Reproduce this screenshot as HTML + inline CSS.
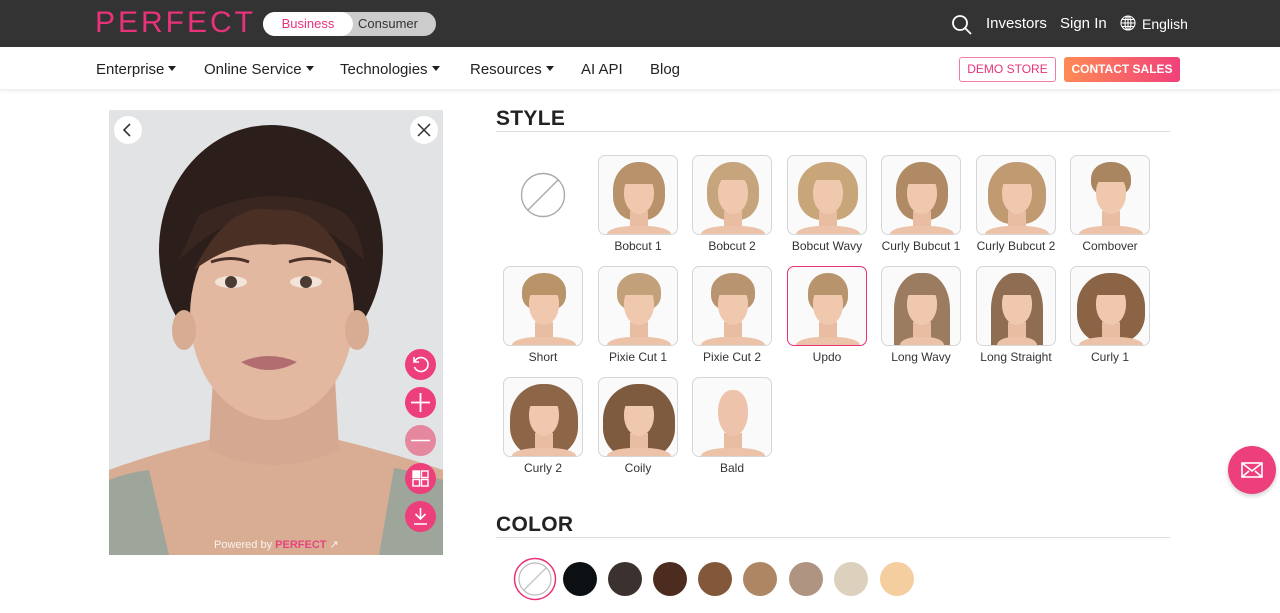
<!DOCTYPE html>
<html><head><meta charset="utf-8"><style>
*{margin:0;padding:0;box-sizing:border-box}
body{width:1280px;height:613px;overflow:hidden;background:#fff;font-family:"Liberation Sans",Roboto,sans-serif;color:#222;position:relative}
.top{position:absolute;left:0;top:0;width:1280px;height:47px;background:#333}
.logo{position:absolute;left:95px;top:6px;font-size:30px;letter-spacing:3px;color:#e8337a;font-weight:300}
.tog{position:absolute;left:263px;top:12px;width:173px;height:24px;border-radius:12px;background:#ccc}
.tog .b{position:absolute;left:0;top:0;width:90px;height:24px;border-radius:12px;background:#fff;color:#e8337a;font-size:13px;text-align:center;line-height:24px}
.tog .c{position:absolute;left:95px;top:0;font-size:13px;line-height:24px;color:#333}
.tr{position:absolute;top:15px;color:#fff;font-size:15px}
.nav{position:absolute;top:61px;font-size:15px;color:#222}
.nav i{display:inline-block;border-left:4px solid transparent;border-right:4px solid transparent;border-top:5px solid #222;margin-left:4px;vertical-align:3px}
.navbar{position:absolute;left:0;top:47px;width:1280px;height:43px;border-bottom:1px solid #eee;box-shadow:0 2px 3px rgba(0,0,0,.05)}
.btn1{position:absolute;left:959px;top:57px;width:97px;height:25px;border:1px solid #f07ca5;border-radius:3px;color:#e8337a;font-size:12px;text-align:center;line-height:23px}
.btn2{position:absolute;left:1064px;top:57px;width:116px;height:25px;border-radius:3px;background:linear-gradient(90deg,#ff8a55,#f0407a);color:#fff;font-size:12px;text-align:center;line-height:25px;font-weight:bold}
.panel{position:absolute;left:109px;top:110px;width:334px;height:445px;background:#e2e3e5;overflow:hidden}
.h{position:absolute;left:496px;font-size:21px;font-weight:bold;color:#222;letter-spacing:.3px}
.line{position:absolute;left:496px;width:674px;height:1px;background:#ddd}
.t{position:absolute;width:80px;height:80px;border:1px solid #d6d6d6;border-radius:7px;overflow:hidden;background:#fafafa}
.t.sel{border:1.5px solid #e8337a}
.t .hr{position:absolute;left:14px;top:6px;width:52px;height:58px;border-radius:48% 48% 40% 40%}
.t .f{position:absolute;left:25px;top:18px;width:30px;height:40px;border-radius:45% 45% 50% 50%;background:#f0c8ae}
.t .bn{position:absolute;left:23px;top:14px;width:34px;height:14px;border-radius:50% 50% 10% 10%}
.t .n{position:absolute;left:31px;top:55px;width:18px;height:20px;background:#e9bda2}
.t .s{position:absolute;left:8px;top:70px;width:64px;height:20px;border-radius:40% 40% 0 0;background:#ecc3a8}
.l{position:absolute;width:100px;text-align:center;font-size:12px;color:#333}
.sw{position:absolute;top:562px;width:34px;height:34px;border-radius:50%}
.rb{position:absolute;left:405px;width:31px;height:31px;border-radius:50%;background:#ec3f7c}
</style></head><body>
<div class="top"></div>
<div class="logo">PERFECT</div>
<div class="tog"><div class="b">Business</div><div class="c">Consumer</div></div>
<svg style="position:absolute;left:951px;top:14px" width="22" height="22" viewBox="0 0 22 22"><circle cx="9" cy="9" r="7" fill="none" stroke="#fff" stroke-width="1.8"/><path d="M14 14l6 6" stroke="#fff" stroke-width="1.8"/></svg>
<div class="tr" style="left:986px">Investors</div>
<div class="tr" style="left:1060px">Sign In</div>
<svg style="position:absolute;left:1120px;top:15px" width="16" height="16" viewBox="0 0 16 16" fill="none" stroke="#fff" stroke-width="1.1"><circle cx="8" cy="8" r="7"/><ellipse cx="8" cy="8" rx="3" ry="7"/><path d="M1 8h14M2 4.5h12M2 11.5h12M8 1v14"/></svg>
<div class="tr" style="left:1142px;font-size:14px;top:16px">English</div>
<div class="navbar"></div>
<div class="nav" style="left:96px">Enterprise<i></i></div>
<div class="nav" style="left:204px">Online Service<i></i></div>
<div class="nav" style="left:340px">Technologies<i></i></div>
<div class="nav" style="left:470px">Resources<i></i></div>
<div class="nav" style="left:581px">AI API</div>
<div class="nav" style="left:650px">Blog</div>
<div class="btn1">DEMO STORE</div>
<div class="btn2">CONTACT SALES</div>

<div class="panel">
<svg width="334" height="445" viewBox="0 0 334 445">
<path d="M0 360 Q40 345 100 330 L230 330 Q290 345 334 360 L334 445 L0 445Z" fill="#d9ad93"/>
<path d="M0 370 Q20 362 40 360 L60 445 L0 445Z" fill="#9ea59a"/>
<path d="M334 370 Q300 360 285 358 L270 445 L334 445Z" fill="#9ea59a"/>
<path d="M105 250 L225 250 L230 340 Q165 370 100 340Z" fill="#d5a891"/>
<ellipse cx="162" cy="140" rx="112" ry="125" fill="#2c1f1b"/>
<ellipse cx="163" cy="205" rx="82" ry="105" fill="#e2b8a0"/>
<ellipse cx="75" cy="220" rx="12" ry="20" fill="#d8ab93"/><ellipse cx="248" cy="220" rx="12" ry="20" fill="#d8ab93"/>
<path d="M70 150 Q160 60 255 150 Q250 110 230 100 Q160 70 90 105Z" fill="#3a2620"/>
<path d="M85 160 Q120 90 165 100 Q215 95 240 160 Q200 130 165 135 Q125 130 85 160Z" fill="#4a2f24"/>
<ellipse cx="122" cy="172" rx="16" ry="6" fill="#fff" opacity=".6"/><circle cx="122" cy="172" r="6" fill="#4a3c33"/>
<ellipse cx="197" cy="172" rx="16" ry="6" fill="#fff" opacity=".6"/><circle cx="197" cy="172" r="6" fill="#4a3c33"/>
<path d="M102 152 Q122 145 140 152M180 152 Q200 145 222 152" stroke="#4a3028" stroke-width="3" fill="none"/>
<path d="M132 252 Q160 240 188 252 Q160 268 132 252Z" fill="#b26d70"/>
<text x="105" y="438" font-size="11" fill="#fff" opacity=".85" font-family="Liberation Sans">Powered by <tspan fill="#e8337a" font-weight="bold">PERFECT</tspan> ↗</text>
</svg>
<div style="position:absolute;left:5px;top:6px;width:28px;height:28px;border-radius:50%;background:#fff"><svg width="28" height="28"><path d="M16 8l-6 6 6 6" stroke="#333" stroke-width="1.6" fill="none"/></svg></div>
<div style="position:absolute;left:301px;top:6px;width:28px;height:28px;border-radius:50%;background:#fff"><svg width="28" height="28"><path d="M8 8l12 12M20 8L8 20" stroke="#333" stroke-width="1.5"/></svg></div>
</div>
<div class="rb" style="top:349px"><svg width="31" height="31" fill="none" stroke="#fff" stroke-width="1.6"><path d="M10 12a7 7 0 1 1 -0.5 6"/><path d="M9 8v5h5"/></svg></div>
<div class="rb" style="top:387px"><svg width="31" height="31" stroke="#fff" stroke-width="1.8"><path d="M15.5 6v19M6 15.5h19"/></svg></div>
<div class="rb" style="top:425px;background:#e5889f"><svg width="31" height="31" stroke="#fff" stroke-width="1.6"><path d="M6 15.5h19"/></svg></div>
<div class="rb" style="top:463px"><svg width="31" height="31" fill="none" stroke="#fff" stroke-width="1.4"><rect x="8" y="8" width="6.5" height="6.5" fill="#fff"/><rect x="16.5" y="8" width="6.5" height="6.5"/><rect x="8" y="16.5" width="6.5" height="6.5"/><rect x="16.5" y="16.5" width="6.5" height="6.5"/></svg></div>
<div class="rb" style="top:501px"><svg width="31" height="31" fill="none" stroke="#fff" stroke-width="1.6"><path d="M15.5 7v11M10.5 13l5 5 5-5M9 23h13"/></svg></div>

<div class="h" style="top:107px">STYLE</div>
<div class="line" style="top:131px"></div>
<svg style="position:absolute;left:520px;top:172px" width="46" height="46"><circle cx="23" cy="23" r="21.5" fill="none" stroke="#aaa" stroke-width="1.4"/><path d="M8 38L38 8" stroke="#aaa" stroke-width="1.4"/></svg>

<div class="t" style="left:598px;top:155px"><div class="hr" style="background:#b8926a"></div><div class="n"></div><div class="s"></div><div class="f"></div><div class="bn" style="background:#b8926a"></div></div>
<div class="t" style="left:692px;top:155px"><div class="hr" style="background:#c6a47c"></div><div class="n"></div><div class="s"></div><div class="f"></div><div class="bn" style="background:#c6a47c;height:10px"></div></div>
<div class="t" style="left:787px;top:155px"><div class="hr" style="background:#c8a67a;left:10px;width:60px"></div><div class="n"></div><div class="s"></div><div class="f"></div><div class="bn" style="background:#c8a67a;height:10px"></div></div>
<div class="t" style="left:881px;top:155px"><div class="hr" style="background:#b08a64"></div><div class="n"></div><div class="s"></div><div class="f"></div><div class="bn" style="background:#b08a64"></div></div>
<div class="t" style="left:976px;top:155px"><div class="hr" style="background:#c09a70;left:11px;width:58px;height:62px"></div><div class="n"></div><div class="s"></div><div class="f"></div><div class="bn" style="background:#c09a70"></div></div>
<div class="t" style="left:1070px;top:155px"><div class="hr" style="background:#a9865f;left:20px;width:40px;height:34px"></div><div class="n"></div><div class="s"></div><div class="f"></div><div class="bn" style="background:#a9865f;height:12px"></div></div>
<div class="l" style="left:588px;top:239px">Bobcut 1</div>
<div class="l" style="left:682px;top:239px">Bobcut 2</div>
<div class="l" style="left:777px;top:239px">Bobcut Wavy</div>
<div class="l" style="left:871px;top:239px">Curly Bubcut 1</div>
<div class="l" style="left:966px;top:239px">Curly Bubcut 2</div>
<div class="l" style="left:1060px;top:239px">Combover</div>
<div class="t" style="left:503px;top:266px"><div class="hr" style="background:#b89468;left:18px;width:44px;height:38px"></div><div class="n"></div><div class="s"></div><div class="f"></div><div class="bn" style="background:#b89468"></div></div>
<div class="t" style="left:598px;top:266px"><div class="hr" style="background:#c2a079;left:18px;width:44px;height:38px"></div><div class="n"></div><div class="s"></div><div class="f"></div><div class="bn" style="background:#c2a079"></div></div>
<div class="t" style="left:692px;top:266px"><div class="hr" style="background:#b89470;left:18px;width:44px;height:38px"></div><div class="n"></div><div class="s"></div><div class="f"></div><div class="bn" style="background:#b89470"></div></div>
<div class="t sel" style="left:787px;top:266px"><div class="hr" style="background:#b8946c;left:20px;width:40px;height:40px"></div><div class="n"></div><div class="s"></div><div class="f"></div><div class="bn" style="background:#b8946c"></div></div>
<div class="t" style="left:881px;top:266px"><div class="hr" style="background:#9c7c60;height:80px;left:12px;width:56px;border-radius:45% 45% 10% 10%"></div><div class="n"></div><div class="s" style="left:18px;width:44px"></div><div class="f"></div><div class="bn" style="background:#9c7c60"></div></div>
<div class="t" style="left:976px;top:266px"><div class="hr" style="background:#8e6d52;height:80px;left:14px;width:52px;border-radius:45% 45% 5% 5%"></div><div class="n"></div><div class="s" style="left:20px;width:40px"></div><div class="f"></div><div class="bn" style="background:#8e6d52"></div></div>
<div class="t" style="left:1070px;top:266px"><div class="hr" style="background:#8a6445;left:6px;width:68px;height:70px"></div><div class="n"></div><div class="s"></div><div class="f"></div><div class="bn" style="background:#8a6445"></div></div>
<div class="l" style="left:493px;top:350px">Short</div>
<div class="l" style="left:588px;top:350px">Pixie Cut 1</div>
<div class="l" style="left:682px;top:350px">Pixie Cut 2</div>
<div class="l" style="left:777px;top:350px">Updo</div>
<div class="l" style="left:871px;top:350px">Long Wavy</div>
<div class="l" style="left:966px;top:350px">Long Straight</div>
<div class="l" style="left:1060px;top:350px">Curly 1</div>
<div class="t" style="left:503px;top:377px"><div class="hr" style="background:#8d6648;left:6px;width:68px;height:72px"></div><div class="n"></div><div class="s"></div><div class="f"></div><div class="bn" style="background:#8d6648"></div></div>
<div class="t" style="left:598px;top:377px"><div class="hr" style="background:#7e5a3e;left:4px;width:72px;height:74px"></div><div class="n"></div><div class="s"></div><div class="f"></div><div class="bn" style="background:#7e5a3e"></div></div>
<div class="t" style="left:692px;top:377px"><div class="n"></div><div class="s"></div><div class="f" style="top:12px;height:46px;background:#eec3ab"></div></div>
<div class="l" style="left:493px;top:461px">Curly 2</div>
<div class="l" style="left:588px;top:461px">Coily</div>
<div class="l" style="left:682px;top:461px">Bald</div>

<div class="h" style="top:513px">COLOR</div>
<div class="line" style="top:537px"></div>
<svg style="position:absolute;left:513px;top:557px" width="44" height="44"><circle cx="22" cy="22" r="20.5" fill="none" stroke="#e8337a" stroke-width="1.5"/><circle cx="22" cy="22" r="16" fill="none" stroke="#bbb" stroke-width="1.2"/><path d="M11 33L33 11" stroke="#bbb" stroke-width="1.2"/></svg>
<div class="sw" style="left:563px;background:#0d1013"></div>
<div class="sw" style="left:608px;background:#3b3230"></div>
<div class="sw" style="left:653px;background:#4c2c1e"></div>
<div class="sw" style="left:698px;background:#83583a"></div>
<div class="sw" style="left:743px;background:#ad8664"></div>
<div class="sw" style="left:789px;background:#af9482"></div>
<div class="sw" style="left:834px;background:#dcd1bd"></div>
<div class="sw" style="left:880px;background:#f4ce9f"></div>

<div style="position:absolute;left:1228px;top:446px;width:48px;height:48px;border-radius:50%;background:#ec3f7c;box-shadow:0 2px 5px rgba(0,0,0,.2)"><svg width="48" height="48" fill="none" stroke="#fff" stroke-width="1.6"><rect x="14" y="17" width="20" height="14"/><path d="M14 17l10 8 10-8M14 31l7-6M34 31l-7-6"/></svg></div>
</body></html>
